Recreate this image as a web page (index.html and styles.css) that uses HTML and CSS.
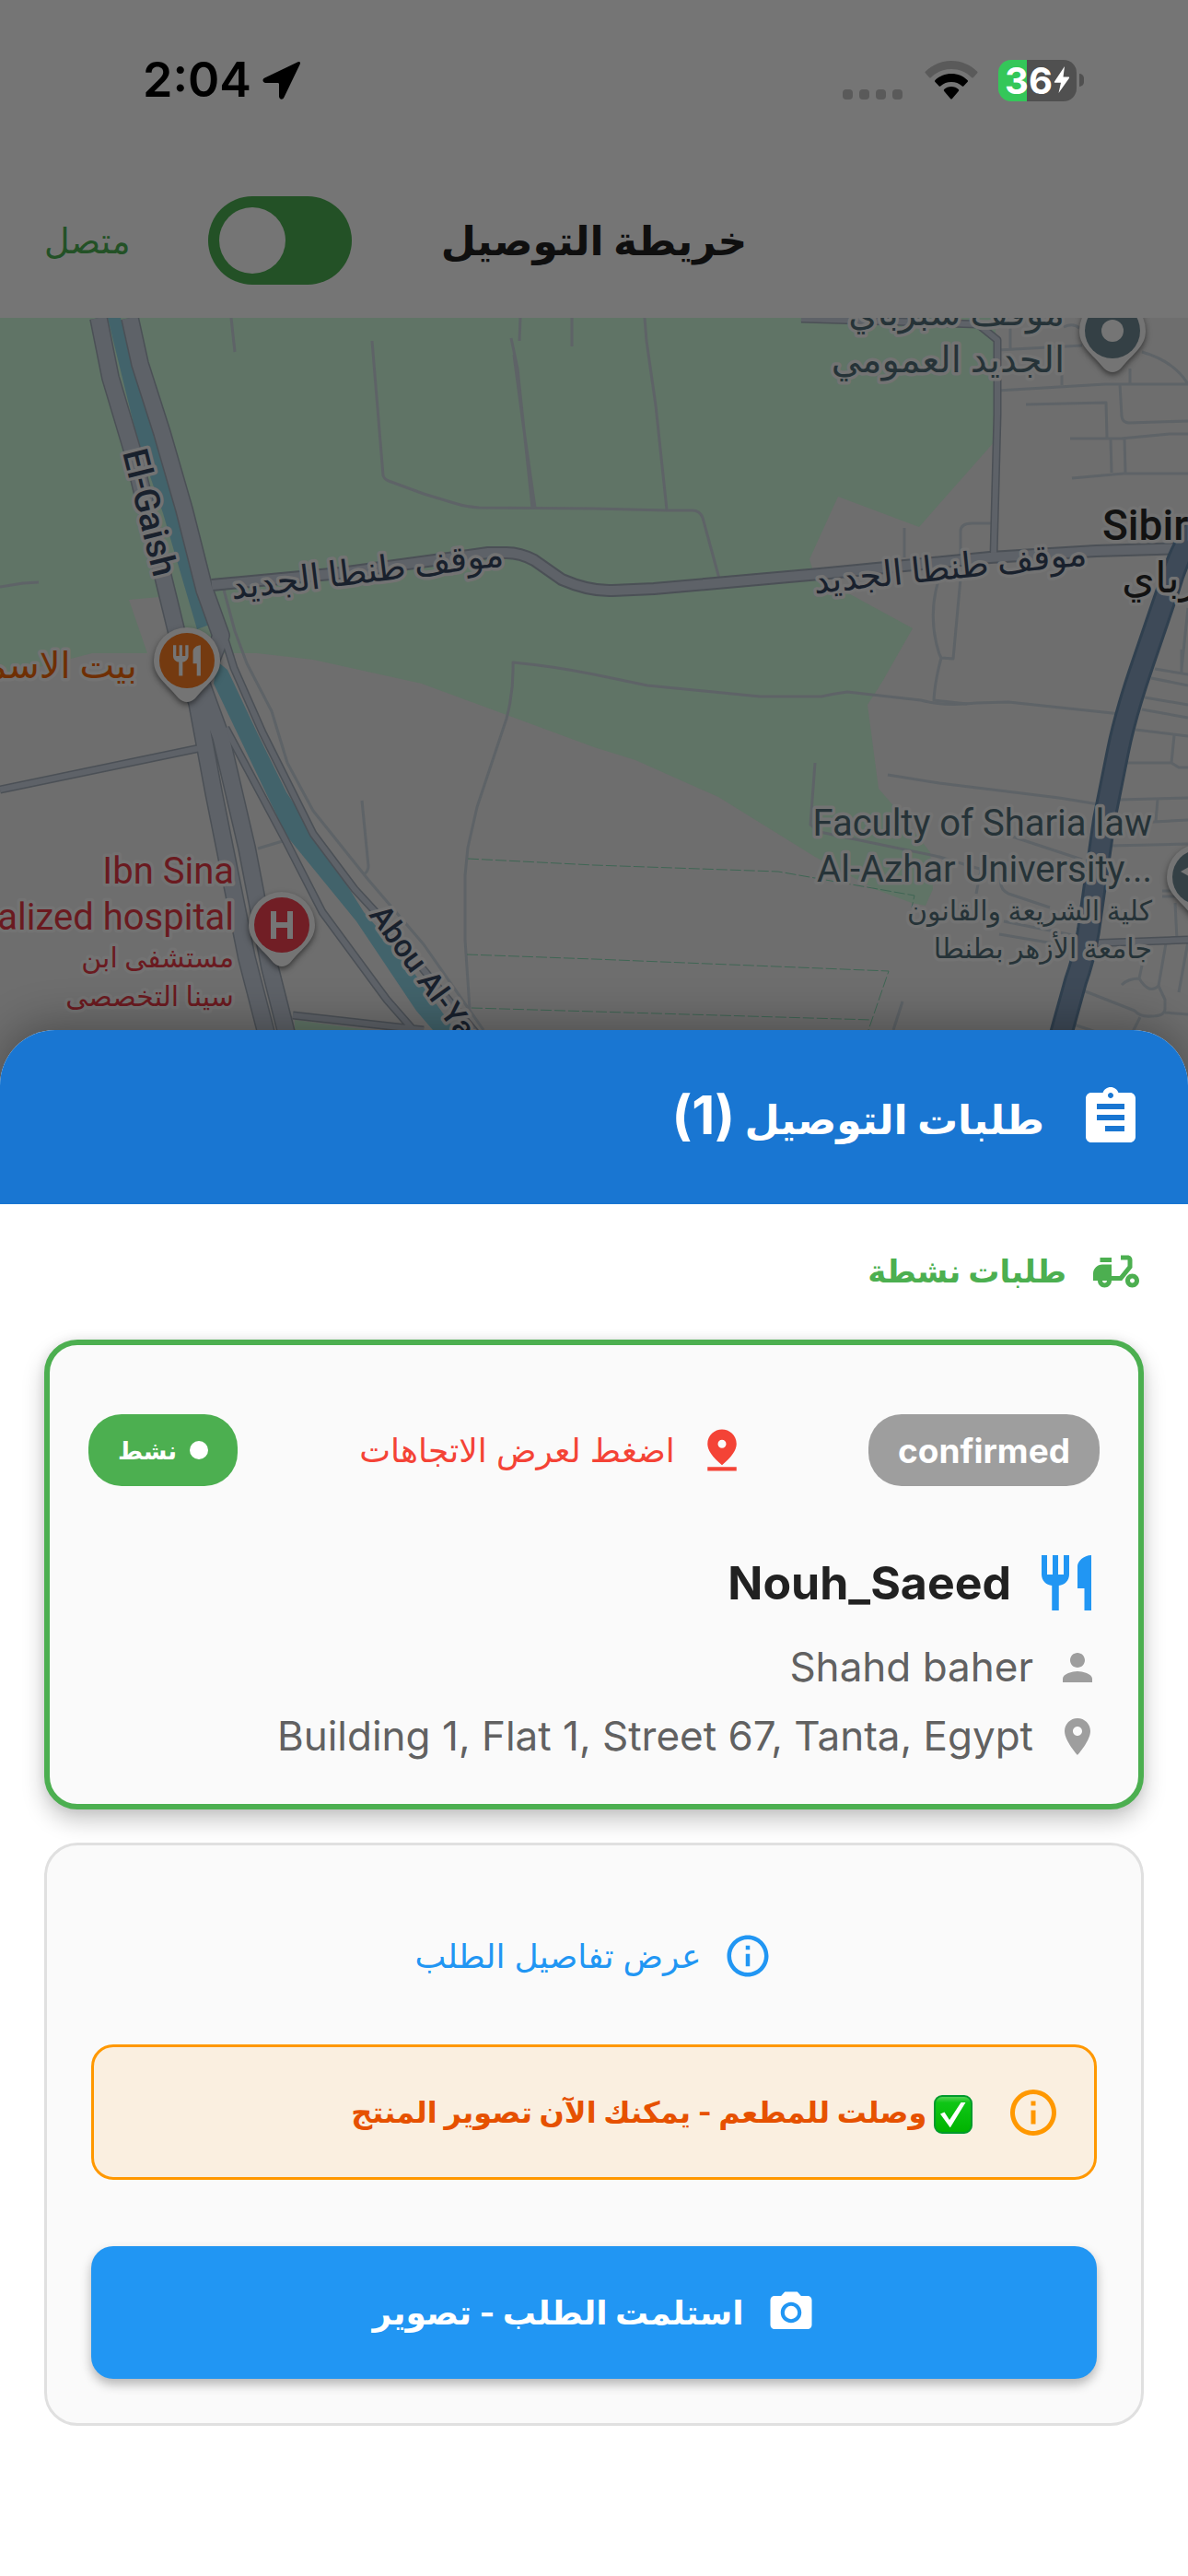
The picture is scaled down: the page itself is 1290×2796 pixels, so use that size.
FILE: index.html
```html
<!DOCTYPE html>
<html lang="ar" dir="rtl">

<head>
    <meta charset="UTF-8">
    <meta name="viewport" content="width=device-width, initial-scale=1.0">
    <title>خريطة التوصيل</title>
    <link rel="stylesheet" href="styles.css">
</head>

<body>
    <!-- Status bar -->
    <div class="status-bar" dir="ltr">
        <div class="status-left">
            <span class="clock">2:04</span>
            <svg class="location-arrow" viewBox="0 0 42 42"><path d="M38.500 1.200 2.500 18.500C-.8 20.200.2 24 3.500 24H16.500C17.500 24 18 24.500 18 25.500V38.500C18 42 22 43 23.500 39.500L40.800 3.500C41.600 1.700 40.300.3 38.500 1.200Z"/></svg>
        </div>
        <div class="status-right">
            <span class="signal"><i></i><i></i><i></i><i></i></span>
            <svg class="wifi" viewBox="0 0 58 42">
                <path fill="#5a5a5a" d="M29 0C18 0 8 4.500 1 11.500q-1 1 0 2L5 18q1 1 2 0C13 12 20.500 9 29 9s16 3 22 9q1 1 2 0l4-4.500q1-1 0-2C50 4.500 40 0 29 0Z"/>
                <path d="M29 14c-7 0-13 2.600-17.500 7q-1 1 0 2l4 4.300q1 1 2 0C20.500 24.500 24.500 23 29 23s8.500 1.500 11.500 4.300q1 1 2 0l4-4.300q1-1 0-2C42 16.600 36 14 29 14Z"/>
                <path d="M29 28c-3 0-5.700 1-7.800 3q-1 1 0 2l6.800 8q1 1 2 0l6.800-8q1-1 0-2C34.700 29 32 28 29 28Z"/>
            </svg>
            <div class="battery">
                <span class="battery-level">36</span>
                <svg class="bolt" viewBox="0 0 18 30"><path d="M12 0 1 16.500q-.7 1.200.7 1.200H8L5.500 29 17 12.800q.7-1.200-.7-1.200H10.500Z"/></svg>
            </div>
            <span class="battery-cap"></span>
        </div>
    </div>

    <!-- App bar -->
    <header class="app-bar">
        <span></span>
        <h1>خريطة التوصيل</h1>
        <div class="online">
            <input type="checkbox" id="onlineSwitch" class="switch" role="switch" checked>
            <label for="onlineSwitch">متصل</label>
        </div>
    </header>

    <!-- Map -->
    <div class="map" dir="ltr">
        <svg viewBox="0 345 1290 833" preserveAspectRatio="xMidYMin slice">
            <defs>
                <g id="pin">
                    <path class="pin-body" d="M0-36A36 36 0 0 0-36 0C-36 17-23 24-9 41Q0 49 9 41C23 24 36 17 36 0A36 36 0 0 0 0-36Z"/>
                    <circle r="30"/>
                </g>
                <clipPath id="mapClip"><rect x="0" y="345" width="1290" height="833"/></clipPath>
            </defs>
            <g clip-path="url(#mapClip)">
                <!-- fields -->
                <path class="field" d="M0 345H1081V478L998 572 910 539 879 607 885 627 925 646 991 682 958 740 942 765 954 856 975 880 1010 925 1013 965 1005 983 990 980 950 965 885 930 780 865 690 825 645 811 458 742 340 716 279 709H100L0 735Z"/>
                <path class="ground" d="M140 651 173 648 192 709H160Z"/>
                <path class="field" d="M320 1107 400 1118H460V1178H320Z"/>

                <!-- canal -->
                <path class="water" d="M117 345H131L142 390 165 450 185 515 230 677 214 683 177 557 150 480Z"/>
                <path class="water" d="M236 718 247 727 280 797 311 860 362 937 395 990 436 1037 494 1118 520 1178H500L470 1118 452 1097 387 1000 311 907 232 742Z"/>

                <!-- lanes -->
                <g class="lane">
                    <path d="M251 345 255 382M404 370 416 516Q417 520 422 522L460 536 493 546Q505 550 520 551L645 552 724 554H752Q760 554 763 562L781 628"/>
                    <path d="M565 345 564 370M621 345V376M555 367 562 400 578 551M558 385 568 460 581 551M700 345 702 370 712 440 724 553M0 637 25 633 42 632"/>
                    <path d="M243 640 255 685 268 720 295 772 312 828 340 880 372 920 400 955 460 1025 525 1118M393 869 400 940Q400 946 395 949M280 921 310 912"/>
                    <path d="M510 1095 505 1020V950L508 920 518 876 550 780Q558 750 557 719 600 723 645 732L703 744 825 756H892Q905 753 920 751L1000 760Q1025 767 1060 763L1095 762 1217 775"/>
                    <path d="M1083 424 1200 417H1290M1083 380 1175 375M1097 352V380M1114 439 1201 437 1202 475M1216 417 1218 452Q1219 459 1226 459L1290 457M1162 476H1217L1270 471H1290M1164 519 1220 514H1290M1206 476 1207 513M1221 476 1222 513M1153 380V418M1227 400V417M1240 382Q1275 392 1290 417M1155 355Q1165 350 1172 356"/>
                    <path d="M982 573V605M1079 568H1055Q1043 568 1043 577V605M1019 630Q1007 670 1020 710L1022 714 1035 715 1043 628M1022 714Q1015 740 1014 760L1050 764"/>
                    <path d="M885 828 880 895 890 903 1020 930 1070 945M964 841 1020 850 1150 866 1193 873M1090 905 1175 933M1065 945 1060 970M1087 955Q1085 965 1095 970L1140 985M1090 1000 1180 1018M1085 1014 1150 1025M980 1087 970 1118"/>
                    <path d="M1254 726 1290 732M1250 736 1290 744M1243 757 1290 765M1240 770 1290 779M1233 792 1290 799M1275 798 1272 828M1223 828H1272L1280 833H1290M1215 868 1290 866M1257 868 1255 892M1235 893 1290 890M1205 918 1290 916M1283 726 1290 660M1283 705V730"/>
                    <path d="M1176 1075 1232 1097Q1238 1104 1250 1103 1265 1103 1265 1095V1085L1258 1070 1266 1024M1218 1069Q1225 1062 1237 1062L1240 1048M1237 1062Q1248 1080 1258 1070M1290 1022 1280 1077M1265 1099 1290 1101M1163 1111 1190 1120M1238 1104 1230 1120M1276 980 1278 1020M1262 967H1290M1262 973H1290"/>
                </g>
                <g class="path-line">
                    <path d="M508 932 645 939 845 946 993 972 990 985M507 1036 645 1041 965 1054 943 1118M512 1094 947 1107"/>
                </g>

                <!-- streets: dark edge first, fill on top -->
                <g class="road-edge">
                    <path class="w9" d="M0 857 217 812M245 790 310 912 350 990 420 1085 455 1125M243 690 254 725 285 795 340 905 385 965 408 990 520 1125M870 346 935 348 1062 352 1083 369V450L1079 603M318 1102 460 1118M1180 1024 1290 1020"/>
                    <path class="w14" d="M230 635 370 622 530 600H550Q565 600 580 608L610 629Q640 642 665 641L710 639 890 623 1075 605 1190 598 1285 595"/>
                    <path class="w20" d="M107 345 120 410 143 487 183 650 200 720 214 763 232 860 250 950 268 1040 290 1125M141 345 152 395 176 470 200 553 222 640 240 690 228 720 218 740 240 800 268 920 293 1050 312 1125"/>
                </g>
                <g class="road">
                    <path class="w6" d="M0 857 217 812M245 790 310 912 350 990 420 1085 455 1125M243 690 254 725 285 795 340 905 385 965 408 990 520 1125M870 346 935 348 1062 352 1083 369V450L1079 603M318 1102 460 1118M1180 1024 1290 1020"/>
                    <path class="w10" d="M230 635 370 622 530 600H550Q565 600 580 608L610 629Q640 642 665 641L710 639 890 623 1075 605 1190 598 1285 595"/>
                    <path class="w17" d="M107 345 120 410 143 487 183 650 200 720 214 763 232 860 250 950 268 1040 290 1125M141 345 152 395 176 470 200 553 222 640 240 690 228 720 218 740 240 800 268 920 293 1050 312 1125"/>
                </g>
                <path class="highway-edge" d="M1300 570Q1280 600 1270 635L1241 720Q1222 775 1214 815L1199 890 1189 960 1182 1010Q1177 1040 1168 1065L1150 1130"/>
                <path class="highway" d="M1300 570Q1280 600 1270 635L1241 720Q1222 775 1214 815L1199 890 1189 960 1182 1010Q1177 1040 1168 1065L1150 1130"/>

                <!-- street names -->
                <g class="street">
                    <text transform="translate(133 491) rotate(76)">El-Gaish</text>
                    <text class="narrow" transform="translate(400 993) rotate(54)">Abou Al-Yazid</text>
                    <text transform="translate(548 614) rotate(-7)" text-anchor="end">موقف طنطا الجديد</text>
                    <text transform="translate(1181 613) rotate(-6)" text-anchor="end">موقف طنطا الجديد</text>
                </g>
                <g class="town">
                    <text x="1197" y="586">Sibirbay</text>
                    <text x="1218" y="643">رباي</text>
                </g>

                <!-- places -->
                <g class="place" text-anchor="end">
                    <text x="1156" y="353">موقف سبرباي</text>
                    <text x="1156" y="404">الجديد العمومي</text>
                    <text class="latin" x="1251" y="907">Faculty of Sharia law</text>
                    <text class="latin" x="1251" y="957">Al-Azhar University...</text>
                    <text class="small" x="1251" y="999">كلية الشريعة والقانون</text>
                    <text class="small" x="1251" y="1040">جامعة الأزهر بطنطا</text>
                </g>
                <g class="place hospital" text-anchor="end">
                    <text class="latin" x="254" y="959">Ibn Sina</text>
                    <text class="latin" x="254" y="1009">Specialized hospital</text>
                    <text class="small" x="254" y="1050">مستشفى ابن</text>
                    <text class="small" x="254" y="1092">سينا التخصصى</text>
                </g>
                <g class="place food" text-anchor="end">
                    <text x="149" y="736">بيت الاسماك</text>
                </g>

                <!-- pins -->
                <g transform="translate(203 717)">
                    <use href="#pin" fill="#743a10"/>
                    <path class="pin-icon" transform="translate(-20 -20) scale(1.660)" d="M11 9H9V2H7v7H5V2H3v7c0 2.120 1.660 3.840 3.750 3.970V22h2.500v-9.030C11.340 12.840 13 11.120 13 9V2h-2v7zm5-3v8h2.500v8H21V2c-2.760 0-5 2.240-5 4z"/>
                </g>
                <g transform="translate(306 1004)">
                    <use href="#pin" fill="#711e25"/>
                    <path class="pin-icon" d="M-12-15H-6V-3H6V-15H12V15H6V3H-6V15H-12Z"/>
                </g>
                <g transform="translate(1208 359)">
                    <use href="#pin" fill="#344045"/>
                    <circle class="pin-icon" r="12"/>
                </g>
                <g transform="translate(1303 952)">
                    <use href="#pin" fill="#344045"/>
                    <path class="pin-icon" d="M-21-6 0-18 21-6 0 6Z"/>
                </g>
            </g>
        </svg>
    </div>

    <!-- Orders sheet -->
    <main class="sheet">
        <div class="sheet-header">
            <svg class="icon icon-lg flip" viewBox="0 0 24 24"><path d="M19 3h-4.180C14.400 1.840 13.300 1 12 1c-1.300 0-2.400.84-2.820 2H5c-1.100 0-2 .9-2 2v14c0 1.100.9 2 2 2h14c1.100 0 2-.9 2-2V5c0-1.100-.9-2-2-2zm-7 0c.55 0 1 .45 1 1s-.45 1-1 1-1-.45-1-1 .45-1 1-1zm2 14H7v-2h7v2zm3-4H7v-2h10v2zm0-4H7V7h10v2z"/></svg>
            <h2>طلبات التوصيل <span class="count">(1)</span></h2>
        </div>

        <div class="sheet-body">
            <div class="section-title">
                <svg class="icon icon-md" viewBox="0 0 24 24"><path fill-rule="evenodd" d="M19 7c0-1.100-.9-2-2-2h-3v2h3v2.650L13.520 14H10V9H6c-2.210 0-4 1.790-4 4v3h2c0 1.660 1.340 3 3 3s3-1.340 3-3h4.480L19 10.350V7zM7 17c-.55 0-1-.45-1-1h2c0 .55-.45 1-1 1zM5 6h5v2H5zM19 13c-1.660 0-3 1.340-3 3s1.340 3 3 3 3-1.340 3-3-1.340-3-3-3zm0 4c-.55 0-1-.45-1-1s.45-1 1-1 1 .45 1 1-.45 1-1 1z"/></svg>
                <h3>طلبات نشطة</h3>
            </div>

            <!-- Active order -->
            <section class="card order">
                <div class="order-top">
                    <span class="chip status">confirmed</span>
                    <button type="button" class="link directions">
                        <svg class="icon icon-sm" viewBox="0 0 24 24"><path fill-rule="evenodd" d="M12 2C8.500 2 5 4.700 5 9c0 3 2.400 6.400 7 10.200C16.600 15.400 19 12 19 9c0-4.300-3.500-7-7-7zm0 5a2 2 0 1 1 0 4 2 2 0 0 1 0-4zM5 20.100h14V22H5z"/></svg>
                        اضغط لعرض الاتجاهات
                    </button>
                    <span class="chip active"><i class="dot"></i>نشط</span>
                </div>
                <div class="order-name">
                    <svg class="icon icon-lg" viewBox="0 0 24 24"><path d="M11 9H9V2H7v7H5V2H3v7c0 2.120 1.660 3.840 3.750 3.970V22h2.500v-9.030C11.340 12.840 13 11.120 13 9V2h-2v7zm5-3v8h2.500v8H21V2c-2.760 0-5 2.240-5 4z"/></svg>
                    <strong>Nouh_Saeed</strong>
                </div>
                <div class="order-info">
                    <svg class="icon icon-xs" viewBox="0 0 24 24"><path d="M12 12c2.210 0 4-1.790 4-4s-1.790-4-4-4-4 1.790-4 4 1.790 4 4 4zm0 2c-2.670 0-8 1.340-8 4v2h16v-2c0-2.660-5.330-4-8-4z"/></svg>
                    <span>Shahd baher</span>
                </div>
                <div class="order-info">
                    <svg class="icon icon-xs" viewBox="0 0 24 24"><path d="M12 2C8.130 2 5 5.130 5 9c0 5.250 7 13 7 13s7-7.750 7-13c0-3.870-3.130-7-7-7zm0 9.500c-1.380 0-2.500-1.120-2.500-2.500s1.120-2.500 2.500-2.500 2.500 1.120 2.500 2.500-1.120 2.500-2.500 2.500z"/></svg>
                    <span dir="ltr">Building 1, Flat 1, Street 67, Tanta, Egypt</span>
                </div>
            </section>

            <!-- Order actions -->
            <section class="card actions">
                <button type="button" class="link details">
                    <svg class="icon icon-sm" viewBox="0 0 24 24"><path d="M11 7h2v2h-2zm0 4h2v6h-2zm1-9C6.480 2 2 6.480 2 12s4.480 10 10 10 10-4.480 10-10S17.520 2 12 2zm0 18c-4.410 0-8-3.590-8-8s3.590-8 8-8 8 3.590 8 8-3.590 8-8 8z"/></svg>
                    عرض تفاصيل الطلب
                </button>
                <div class="notice">
                    <svg class="icon icon-md" viewBox="0 0 24 24"><path d="M11 7h2v2h-2zm0 4h2v6h-2zm1-9C6.480 2 2 6.480 2 12s4.480 10 10 10 10-4.480 10-10S17.520 2 12 2zm0 18c-4.410 0-8-3.590-8-8s3.590-8 8-8 8 3.590 8 8-3.590 8-8 8z"/></svg>
                    <p>
                        <svg class="check" viewBox="0 0 42 42" role="img" aria-label="✅">
                            <defs>
                                <linearGradient id="checkFill" x1="0" y1="0" x2="0" y2="1">
                                    <stop offset="0" stop-color="#5fd35f"/>
                                    <stop offset=".18" stop-color="#0fc616"/>
                                    <stop offset="1" stop-color="#00b300"/>
                                </linearGradient>
                            </defs>
                            <rect x="1" y="1" width="40" height="40" rx="8" fill="url(#checkFill)" stroke="#009a2c" stroke-width="2"/>
                            <path fill="#fff" d="M7 20.500 11.500 18.500 17 27 29.500 8H34.500L18 35H17.500Z"/>
                        </svg>
                        وصلت للمطعم - يمكنك الآن تصوير المنتج
                    </p>
                </div>
                <button type="button" class="primary">
                    <svg class="icon icon-sm" viewBox="0 0 24 24"><circle cx="12" cy="12" r="3.200"/><path d="M9 2 7.170 4H4c-1.100 0-2 .9-2 2v12c0 1.100.9 2 2 2h16c1.100 0 2-.9 2-2V6c0-1.100-.9-2-2-2h-3.170L15 2H9zm3 15c-2.760 0-5-2.240-5-5s2.240-5 5-5 5 2.240 5 5-2.240 5-5 5z"/></svg>
                    استلمت الطلب - تصوير
                </button>
            </section>
        </div>
    </main>
</body>

</html>
```
FILE: styles.css
```css
/* General styles */
* {
    box-sizing: border-box;
}

body {
    margin: 0;
    min-height: 100vh;
    display: flex;
    flex-direction: column;
    font-family: Inter, "DejaVu Sans", sans-serif;
    background-color: #757575;
    color: #212121;
}

h1, h2, h3, p {
    margin: 0;
}

button {
    border: none;
    background: none;
    padding: 0;
    font-family: inherit;
    cursor: pointer;
}

/* Status bar */
.status-bar {
    height: 177px;
    padding: 0 113px 3px 155px;
    display: flex;
    justify-content: space-between;
    align-items: center;
    color: #000;
}

.status-left, .status-right {
    display: flex;
    align-items: center;
}

.status-left {
    gap: 12px;
}

.clock {
    font-size: 52px;
    font-weight: 600;
    line-height: 60px;
}

.location-arrow {
    width: 42px;
    height: 42px;
}

.signal {
    display: flex;
    gap: 7px;
    align-self: flex-end;
    margin: 0 24px 2px 0;
}

.signal i {
    width: 11px;
    height: 11px;
    border-radius: 4px;
    background: #5a5a5a;
}

.wifi {
    width: 58px;
    height: 42px;
    margin-right: 22px;
}

.battery {
    width: 85px;
    height: 45px;
    border-radius: 14px;
    background: linear-gradient(90deg, #34c759 36%, #505050 36%);
    display: flex;
    align-items: center;
    justify-content: center;
    gap: 1px;
    color: #fff;
}

.battery-level {
    font-size: 40px;
    font-weight: 700;
    line-height: 45px;
}

.bolt {
    width: 18px;
    height: 30px;
    fill: #fff;
}

.battery-cap {
    width: 5px;
    height: 14px;
    margin-left: 3px;
    border-radius: 0 6px 6px 0;
    background: #505050;
}

/* App bar */
.app-bar {
    height: 168px;
    padding: 0 48px;
    display: grid;
    grid-template-columns: 1fr auto 1fr;
    align-items: center;
}

.app-bar h1 {
    font-size: 44px;
    line-height: 72px;
    color: #0f0f0f;
}

.online {
    display: flex;
    justify-content: flex-end;
    align-items: center;
    gap: 84px;
    font-size: 38px;
    color: #235126;
}

.switch {
    appearance: none;
    width: 156px;
    height: 96px;
    margin: 0;
    padding: 12px;
    border-radius: 48px;
    background: #235126;
    display: flex;
    justify-content: flex-end;
}

.switch::before {
    content: "";
    width: 72px;
    height: 72px;
    border-radius: 50%;
    background: #757575;
}

/* Map */
.map {
    height: 833px;
    background: #6e6e6e;
}

.map svg {
    display: block;
    width: 100%;
    height: 100%;
}

.field {
    fill: #607466;
}

.ground {
    fill: #6e6e6e;
}

.water {
    fill: #42636b;
}

.lane, .path-line, .road, .road-edge, .highway, .highway-edge {
    fill: none;
    stroke-linejoin: round;
}

.lane {
    stroke: #5e6367;
    stroke-width: 3;
}

.path-line {
    stroke: #3f6654;
    stroke-width: 1;
    stroke-dasharray: 12 3;
}

.road-edge {
    stroke: #4b5056;
}

.road {
    stroke: #5e6268;
}

.w6 {
    stroke-width: 6px;
}

.w9 {
    stroke-width: 9px;
}

.w10 {
    stroke-width: 10px;
}

.w14 {
    stroke-width: 14px;
}

.w17 {
    stroke-width: 17px;
}

.w20 {
    stroke-width: 20px;
}

.highway {
    stroke: #3e4a58;
    stroke-width: 20;
}

.highway-edge {
    stroke: #30404f;
    stroke-width: 26;
}

.map text {
    paint-order: stroke;
    stroke: #737373;
    stroke-width: 7;
    stroke-linejoin: round;
    font-family: Roboto, "DejaVu Sans", sans-serif;
}

.street {
    font-size: 38px;
    font-weight: 500;
    fill: #19212d;
}

.street .narrow {
    font-size: 34px;
}

.town {
    font-size: 46px;
    font-weight: 500;
    fill: #121212;
}

.place {
    font-size: 40px;
    fill: #263338;
}

.place .small {
    font-size: 30px;
}

.hospital {
    fill: #6a1a20;
}

.food {
    fill: #6f2f04;
}

.pin-body {
    fill: #747474;
    filter: drop-shadow(0 3px 3px rgba(0, 0, 0, 0.5));
}

.pin-icon {
    fill: #757575;
}

/* Sheet */
.sheet {
    position: relative;
    flex: 1;
    margin-top: -60px;
    border-radius: 60px 60px 0 0;
    background: #fff;
    box-shadow: 0 -6px 48px rgba(0, 0, 0, 0.3);
}

.sheet-header {
    display: flex;
    align-items: center;
    gap: 36px;
    height: 189px;
    padding: 0 48px;
    border-radius: 60px 60px 0 0;
    background: #1976d2;
    color: #fff;
}

.sheet-header h2 {
    font-size: 44px;
    line-height: 84px;
}

.count {
    font-size: 58px;
}

.sheet-body {
    padding: 40px 48px;
}

.section-title {
    display: flex;
    align-items: center;
    gap: 24px;
    margin-bottom: 41px;
    color: #4caf50;
}

.section-title h3 {
    font-size: 34px;
    line-height: 66px;
}

/* Icons */
.icon {
    flex: none;
    fill: currentColor;
}

.icon-xs {
    width: 48px;
    height: 48px;
}

.icon-sm {
    width: 54px;
    height: 54px;
}

.icon-md {
    width: 60px;
    height: 60px;
}

.icon-lg {
    width: 72px;
    height: 72px;
}

.flip {
    transform: scaleX(-1);
}

/* Cards */
.card {
    border-radius: 36px;
    background: #fafafa;
    margin-bottom: 36px;
}

.order {
    border: 6px solid #4caf50;
    padding: 42px;
    box-shadow: 0 12px 24px rgba(0, 0, 0, 0.22), 0 0 12px rgba(0, 0, 0, 0.08);
}

.order-top {
    display: flex;
    justify-content: space-between;
    align-items: center;
    height: 144px;
    margin-bottom: 36px;
}

.chip {
    display: flex;
    align-items: center;
    gap: 14px;
    height: 78px;
    padding: 0 32px;
    border-radius: 36px;
    font-weight: 700;
    color: #fff;
}

.status {
    font-size: 37px;
    background: #9e9e9e;
}

.active {
    font-size: 26px;
    background: #4caf50;
}

.dot {
    width: 20px;
    height: 20px;
    border-radius: 50%;
    background: #fff;
}

.link, .primary {
    display: flex;
    justify-content: center;
    align-items: center;
    gap: 24px;
    height: 144px;
    font-size: 36px;
}

.directions {
    color: #f44336;
}

.order-name {
    display: flex;
    align-items: center;
    gap: 24px;
    height: 72px;
    margin-bottom: 24px;
    font-size: 50px;
}

.order-name .icon {
    color: #2196f3;
}

.order-info {
    display: flex;
    align-items: center;
    gap: 24px;
    font-size: 44px;
    line-height: 63px;
    color: #616161;
}

.order-info + .order-info {
    margin-top: 12px;
}

.order-info .icon {
    color: #9e9e9e;
}

.actions {
    border: 3px solid #e0e0e0;
    padding: 48px;
}

.details {
    width: 100%;
    color: #2196f3;
}

.notice {
    display: flex;
    align-items: center;
    gap: 36px;
    min-height: 147px;
    margin: 24px 0 72px;
    padding: 0 36px;
    border: 3px solid #ff9800;
    border-radius: 24px;
    background: #faefe0;
    color: #ff9800;
}

.notice p {
    font-size: 32px;
    font-weight: 700;
    line-height: 60px;
    color: #e65100;
}

.check {
    width: 42px;
    height: 42px;
    vertical-align: middle;
}

.primary {
    width: 100%;
    border-radius: 24px;
    background: #2196f3;
    color: #fff;
    font-weight: 700;
    box-shadow: 0 6px 12px rgba(0, 0, 0, 0.28);
}
```
